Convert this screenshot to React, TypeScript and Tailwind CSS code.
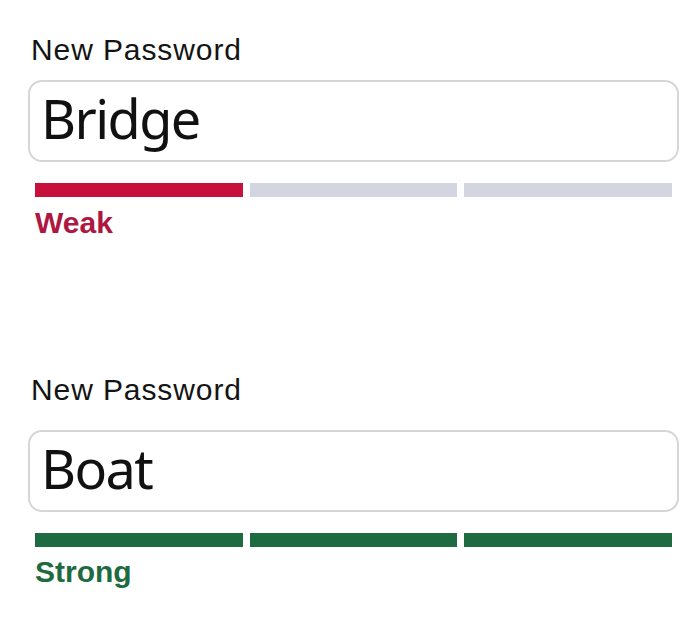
const sans = { fontFamily: '"Liberation Sans", Arial, sans-serif' };

interface StrengthFieldProps {
  value: string;
  level: 'weak' | 'strong';
  boxGap: string;
  statusGap: string;
}

function StrengthField({ value, level, boxGap, statusGap }: StrengthFieldProps) {
  const filled = level === 'weak' ? 1 : 3;
  const barColor = level === 'weak' ? 'bg-[#c8103d]' : 'bg-[#1e6b41]';
  const textColor = level === 'weak' ? 'text-[#ad1741]' : 'text-[#1e6b41]';

  return (
    <div className="flex flex-col">
      <label className="text-[30px] leading-[34px] tracking-[0.9px] text-[#141414] pl-[3px]" style={sans}>
        New Password
      </label>
      <div className={`${boxGap} h-[82px] w-[651px] rounded-[14px] border-2 border-[#d6d6d8] bg-white pl-[11px] pt-[9px]`}>
        <span
          className="block text-[54px] leading-[54px] tracking-[-1.6px] text-[#111]"
          style={{ fontFamily: '"Noto Sans", "Open Sans", sans-serif' }}
        >
          {value}
        </span>
      </div>
      <div className="mt-[21px] ml-[7px] w-[637px] grid grid-cols-3 gap-[7px]">
        {[0, 1, 2].map((i) => (
          <div key={i} className={`h-[14px] ${i < filled ? barColor : 'bg-[#d3d6e1]'}`} />
        ))}
      </div>
      <span className={`${statusGap} ml-[7px] text-[30px] leading-[34px] font-bold ${textColor}`} style={sans}>
        {level === 'weak' ? 'Weak' : 'Strong'}
      </span>
    </div>
  );
}

export default function App() {
  return (
    <div className="w-[700px] h-[621px] bg-white pl-[28px] pt-[33px] flex flex-col gap-[133px]">
      <StrengthField value="Bridge" level="weak" boxGap="mt-[13px]" statusGap="mt-[9px]" />
      <StrengthField value="Boat" level="strong" boxGap="mt-[23px]" statusGap="mt-[8px]" />
    </div>
  );
}
